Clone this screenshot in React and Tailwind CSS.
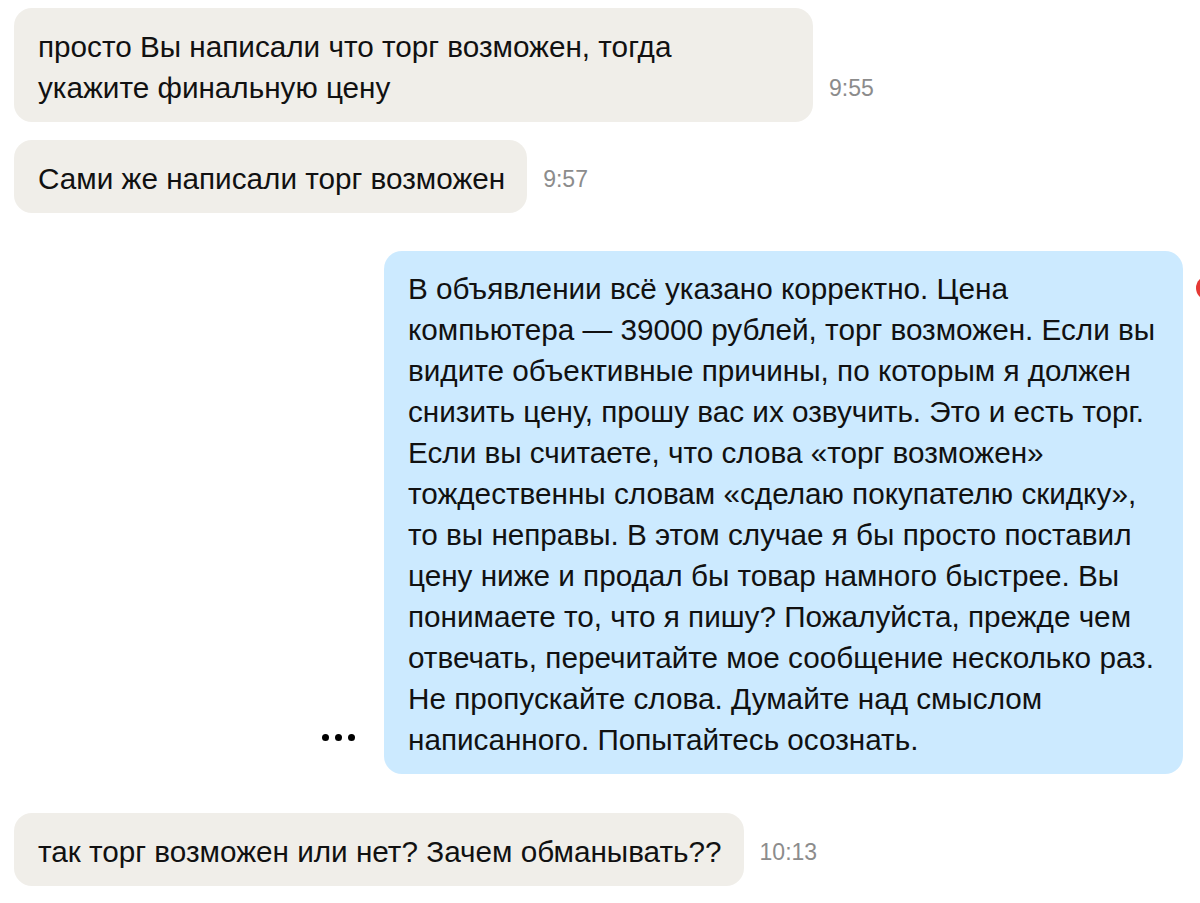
import React from "react";

const font = { fontFamily: '"Liberation Sans", Arial, sans-serif' };

function Lines({ lines }) {
  return lines.map((l, i) => (
    <span key={i} className="block whitespace-nowrap">
      {l}
    </span>
  ));
}

function Incoming({ lines, time, width }) {
  return (
    <div className="flex items-end">
      <div className={`bg-[#f0eee9] rounded-[18px] pl-6 pr-[22px] pt-[18px] pb-[14px] text-[29.7px] leading-[41px] text-[#111] ${width || ""}`}>
        <Lines lines={lines} />
      </div>
      <div className="ml-4 mb-[22px] text-[23px] leading-6 text-[#8c8c8c]">{time}</div>
    </div>
  );
}

const longLines = [
  "В объявлении всё указано корректно. Цена",
  "компьютера — 39000 рублей, торг возможен. Если вы",
  "видите объективные причины, по которым я должен",
  "снизить цену, прошу вас их озвучить. Это и есть торг.",
  "Если вы считаете, что слова «торг возможен»",
  "тождественны словам «сделаю покупателю скидку»,",
  "то вы неправы. В этом случае я бы просто поставил",
  "цену ниже и продал бы товар намного быстрее. Вы",
  "понимаете то, что я пишу? Пожалуйста, прежде чем",
  "отвечать, перечитайте мое сообщение несколько раз.",
  "Не пропускайте слова. Думайте над смыслом",
  "написанного. Попытайтесь осознать.",
];

export default function App() {
  return (
    <div className="relative w-[1200px] h-[903px] overflow-hidden bg-white" style={font}>
      <div className="flex flex-col pl-[14px] pt-2">
        <Incoming
          lines={["просто Вы написали что торг возможен, тогда", "укажите финальную цену"]}
          time="9:55"
          width="w-[799px]"
        />
        <div className="mt-[18px]">
          <Incoming lines={["Сами же написали торг возможен"]} time="9:57" />
        </div>

        <div className="mt-[38px] flex items-end justify-end pr-[17px]">
          <div className="mr-[29px] mb-[33px] flex gap-[6px]">
            <span className="w-[7px] h-[7px] rounded-full bg-black" />
            <span className="w-[7px] h-[7px] rounded-full bg-black" />
            <span className="w-[7px] h-[7px] rounded-full bg-black" />
          </div>
          <div className="w-[799px] bg-[#cceaff] rounded-[18px] pl-6 pr-[22px] pt-[17px] pb-[14px] text-[29.7px] leading-[41px] text-[#111]">
            <Lines lines={longLines} />
          </div>
        </div>

        <div className="mt-[39px]">
          <Incoming lines={["так торг возможен или нет? Зачем обманывать??"]} time="10:13" />
        </div>
      </div>

      <div className="absolute left-[1196px] top-[276px] w-6 h-6 rounded-full bg-[#e53935]" />
    </div>
  );
}
